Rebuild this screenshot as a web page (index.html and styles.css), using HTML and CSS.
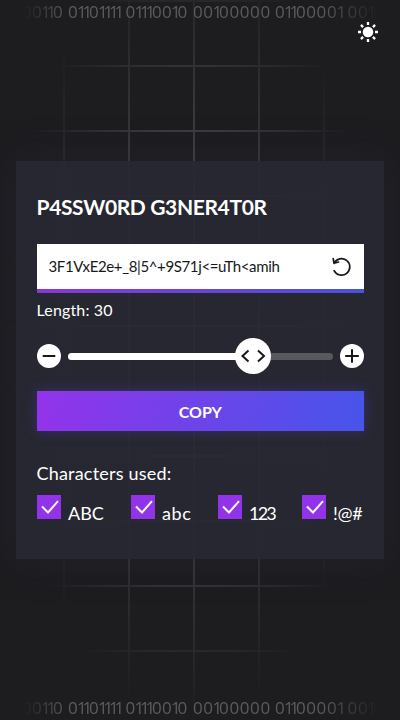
FILE: index.html
```html
<!DOCTYPE html>
<html lang="en">
<head>
<meta charset="utf-8">
<title>P4SSW0RD G3NER4T0R</title>
<link rel="stylesheet" href="styles.css">
</head>
<body>
<div class="grid"></div>
<svg class="binary top" viewBox="0 0 400 24" aria-hidden="true"><text x="22 32 41 46.5 53" y="18">00110</text><text x="68 77 82.5 89 98 103.5 109 114.5" y="18">01101111</text><text x="125.5 134.5 140 145.5 152 162 171 177.5" y="18">01110010</text><text x="193 203.3 212.6 219.1 229.4 239.7 250 260.5" y="18">00100000</text><text x="275 284 289.5 296 306.3 316.6 326.9 336.5" y="18">01100001</text><text x="347.5 358 367 373" y="18">0010</text></svg>
<button class="theme" aria-label="Theme"><svg width="22" height="22" viewBox="0 0 22 22"><circle cx="11" cy="11" r="5.300" fill="#fff"/><path d="M11 1v3M11 18v3M1 11h3M18 11h3M3.900 3.900l2.200 2.200M15.900 15.900l2.200 2.200M3.900 18.100l2.200-2.200M15.900 6.100l2.200-2.200" stroke="#fff" stroke-width="2.300"/></svg></button>
<main class="card">
  <h1>P4SSW0RD G3NER4T0R</h1>
  <div class="password"><span class="value">3F1VxE2e+_8|5^+9S71j&lt;=uTh&lt;amih</span>
    <svg width="22" height="22" viewBox="0 0 22 22" fill="none" stroke="#18181b" stroke-width="1.700" stroke-linecap="round" stroke-linejoin="round"><path d="M3 7.300A8.300 8.300 0 1 1 3.100 14.700M2.200 2.700L3 7.300L7.600 6"/></svg>
  </div>
  <div class="length">Length: 30</div>
  <div class="slider">
    <svg class="step" viewBox="0 0 24 24"><circle cx="12" cy="12" r="12" fill="#fff"/><path d="M5.700 12h12.600" stroke="#18181b" stroke-width="2"/></svg>
    <div class="track"><div class="fill"></div>
      <svg class="thumb" viewBox="0 0 36 36"><circle cx="18" cy="18" r="18" fill="#fff"/><path d="M13.500 12.500L7.500 18l6 5.500M23 12.500l6 5.500-6 5.500" fill="none" stroke="#18181b" stroke-width="2"/></svg>
    </div>
    <svg class="step" viewBox="0 0 24 24"><circle cx="12" cy="12" r="12" fill="#fff"/><path d="M5.200 12h13.600M12 5.200v13.600" stroke="#18181b" stroke-width="2"/></svg>
  </div>
  <button class="copy">COPY</button>
  <h2>Characters used:</h2>
  <div class="options">
    <label class="upper"><svg viewBox="0 0 24 24"><path d="M5 11.500l6 6L21 6.200"/></svg><span>ABC</span></label>
    <label class="lower"><svg viewBox="0 0 24 24"><path d="M5 11.500l6 6L21 6.200"/></svg><span>abc</span></label>
    <label class="digits"><svg viewBox="0 0 24 24"><path d="M5 11.500l6 6L21 6.200"/></svg><span>123</span></label>
    <label class="symbols"><svg viewBox="0 0 24 24"><path d="M5 11.500l6 6L21 6.200"/></svg><span>!@#</span></label>
  </div>
</main>
<svg class="binary bottom" viewBox="0 0 400 24" aria-hidden="true"><text x="22 32 41 46.5 53" y="18">00110</text><text x="68 77 82.5 89 98 103.5 109 114.5" y="18">01101111</text><text x="125.5 134.5 140 145.5 152 162 171 177.5" y="18">01110010</text><text x="193 203.3 212.6 219.1 229.4 239.7 250 260.5" y="18">00100000</text><text x="275 284 289.5 296 306.3 316.6 326.9 336.5" y="18">01100001</text><text x="347.5 358 367 373" y="18">0010</text></svg>
</body>
</html>
```
FILE: styles.css
```css
* { box-sizing: border-box; }
body {
  margin: 0;
  height: 720px;
  overflow: hidden;
  position: relative;
  padding: 161px 16px 0;
  background: #1d1d20;
  color: #fff;
  font-family: Lato, "Open Sans", sans-serif;
}
.grid {
  position: absolute;
  inset: 0;
  background-image:
    linear-gradient(90deg, #48484c 1.6px, transparent 1.6px),
    linear-gradient(#48484c 1.6px, transparent 1.6px);
  background-size: 65px 65px;
  background-position: -2px 0;
  -webkit-mask-image: radial-gradient(ellipse 185px 400px at 190px 330px, #000 30%, transparent 100%);
  mask-image: radial-gradient(ellipse 185px 400px at 190px 330px, #000 30%, transparent 100%);
}
.binary {
  position: absolute;
  left: 0;
  width: 400px;
  height: 24px;
  fill: #5c5c5e;
  font-family: "Open Sans", sans-serif;
  font-size: 17px;
  font-weight: 500;
  -webkit-mask-image: linear-gradient(90deg, transparent 22px, #000 68px, #000 320px, transparent 380px);
  mask-image: linear-gradient(90deg, transparent 22px, #000 68px, #000 320px, transparent 380px);
}
.top { top: 0; }
.bottom { top: 696px; }
button { border: 0; padding: 0; font-family: inherit; color: inherit; }
.theme {
  position: absolute;
  top: 21px;
  left: 357px;
  width: 22px;
  height: 22px;
  background: none;
}
svg { display: block; flex: none; }
.card {
  position: relative;
  height: 397.5px;
  padding: 33px 20px 0 20.5px;
  background: rgba(40, 40, 51, 0.93);
  box-shadow: 0 0 36px rgba(40, 40, 64, 0.35);
}
h1 {
  margin: 0 0 24px;
  height: 26px;
  font-size: 21px;
  line-height: 26px;
  font-weight: 700;
  letter-spacing: -0.36px;
  white-space: nowrap;
}
.password {
  height: 49px;
  padding: 0 11px 4px 12px;
  display: flex;
  align-items: center;
  justify-content: space-between;
  background: linear-gradient(#fff, #fff) 0 0 / 100% 45px no-repeat, linear-gradient(90deg, #8a35dc, #4852e0);
  color: #18181b;
  font-size: 15px;
}
.value { white-space: nowrap; margin-top: -2px; letter-spacing: -0.37px; }
.length { height: 20px; margin-top: 7px; font-size: 16px; line-height: 20px; letter-spacing: 0.15px; }
.slider {
  display: flex;
  align-items: center;
  height: 36px;
  margin-top: 18px;
  gap: 7px;
}
.step { width: 24px; height: 24px; }
.track { position: relative; flex: 1; height: 7px; border-radius: 4px; background: #58585d; }
.fill { width: 185px; height: 7px; border-radius: 4px; background: #fff; }
.thumb { position: absolute; left: 167px; top: -14.5px; width: 36px; height: 36px; }
.copy {
  display: block;
  width: 100%;
  height: 40px;
  margin-top: 17px;
  background: linear-gradient(105deg, #9333ea, #4655ea);
  box-shadow: 0 0 14px rgba(88, 63, 220, 0.35);
  font-size: 16px;
  font-weight: 700;
}
h2 { margin: 30px 0 0; height: 24px; font-size: 18px; line-height: 24px; font-weight: 400; letter-spacing: 0.2px; }
.options { display: flex; margin-top: 10px; font-size: 18px; line-height: 24px; }
.options label { display: flex; gap: 7.5px; }
.options svg { width: 24px; height: 24px; background: #9233e9; }
.options path { fill: none; stroke: #fff; stroke-width: 2; }
.options span { margin-top: 6px; }
.upper { width: 94px; }
.lower { width: 87px; }
.lower span { letter-spacing: 0.6px; }
.digits { width: 84px; }
.digits span { letter-spacing: -1.8px; }
.symbols span { letter-spacing: -0.3px; }
```
